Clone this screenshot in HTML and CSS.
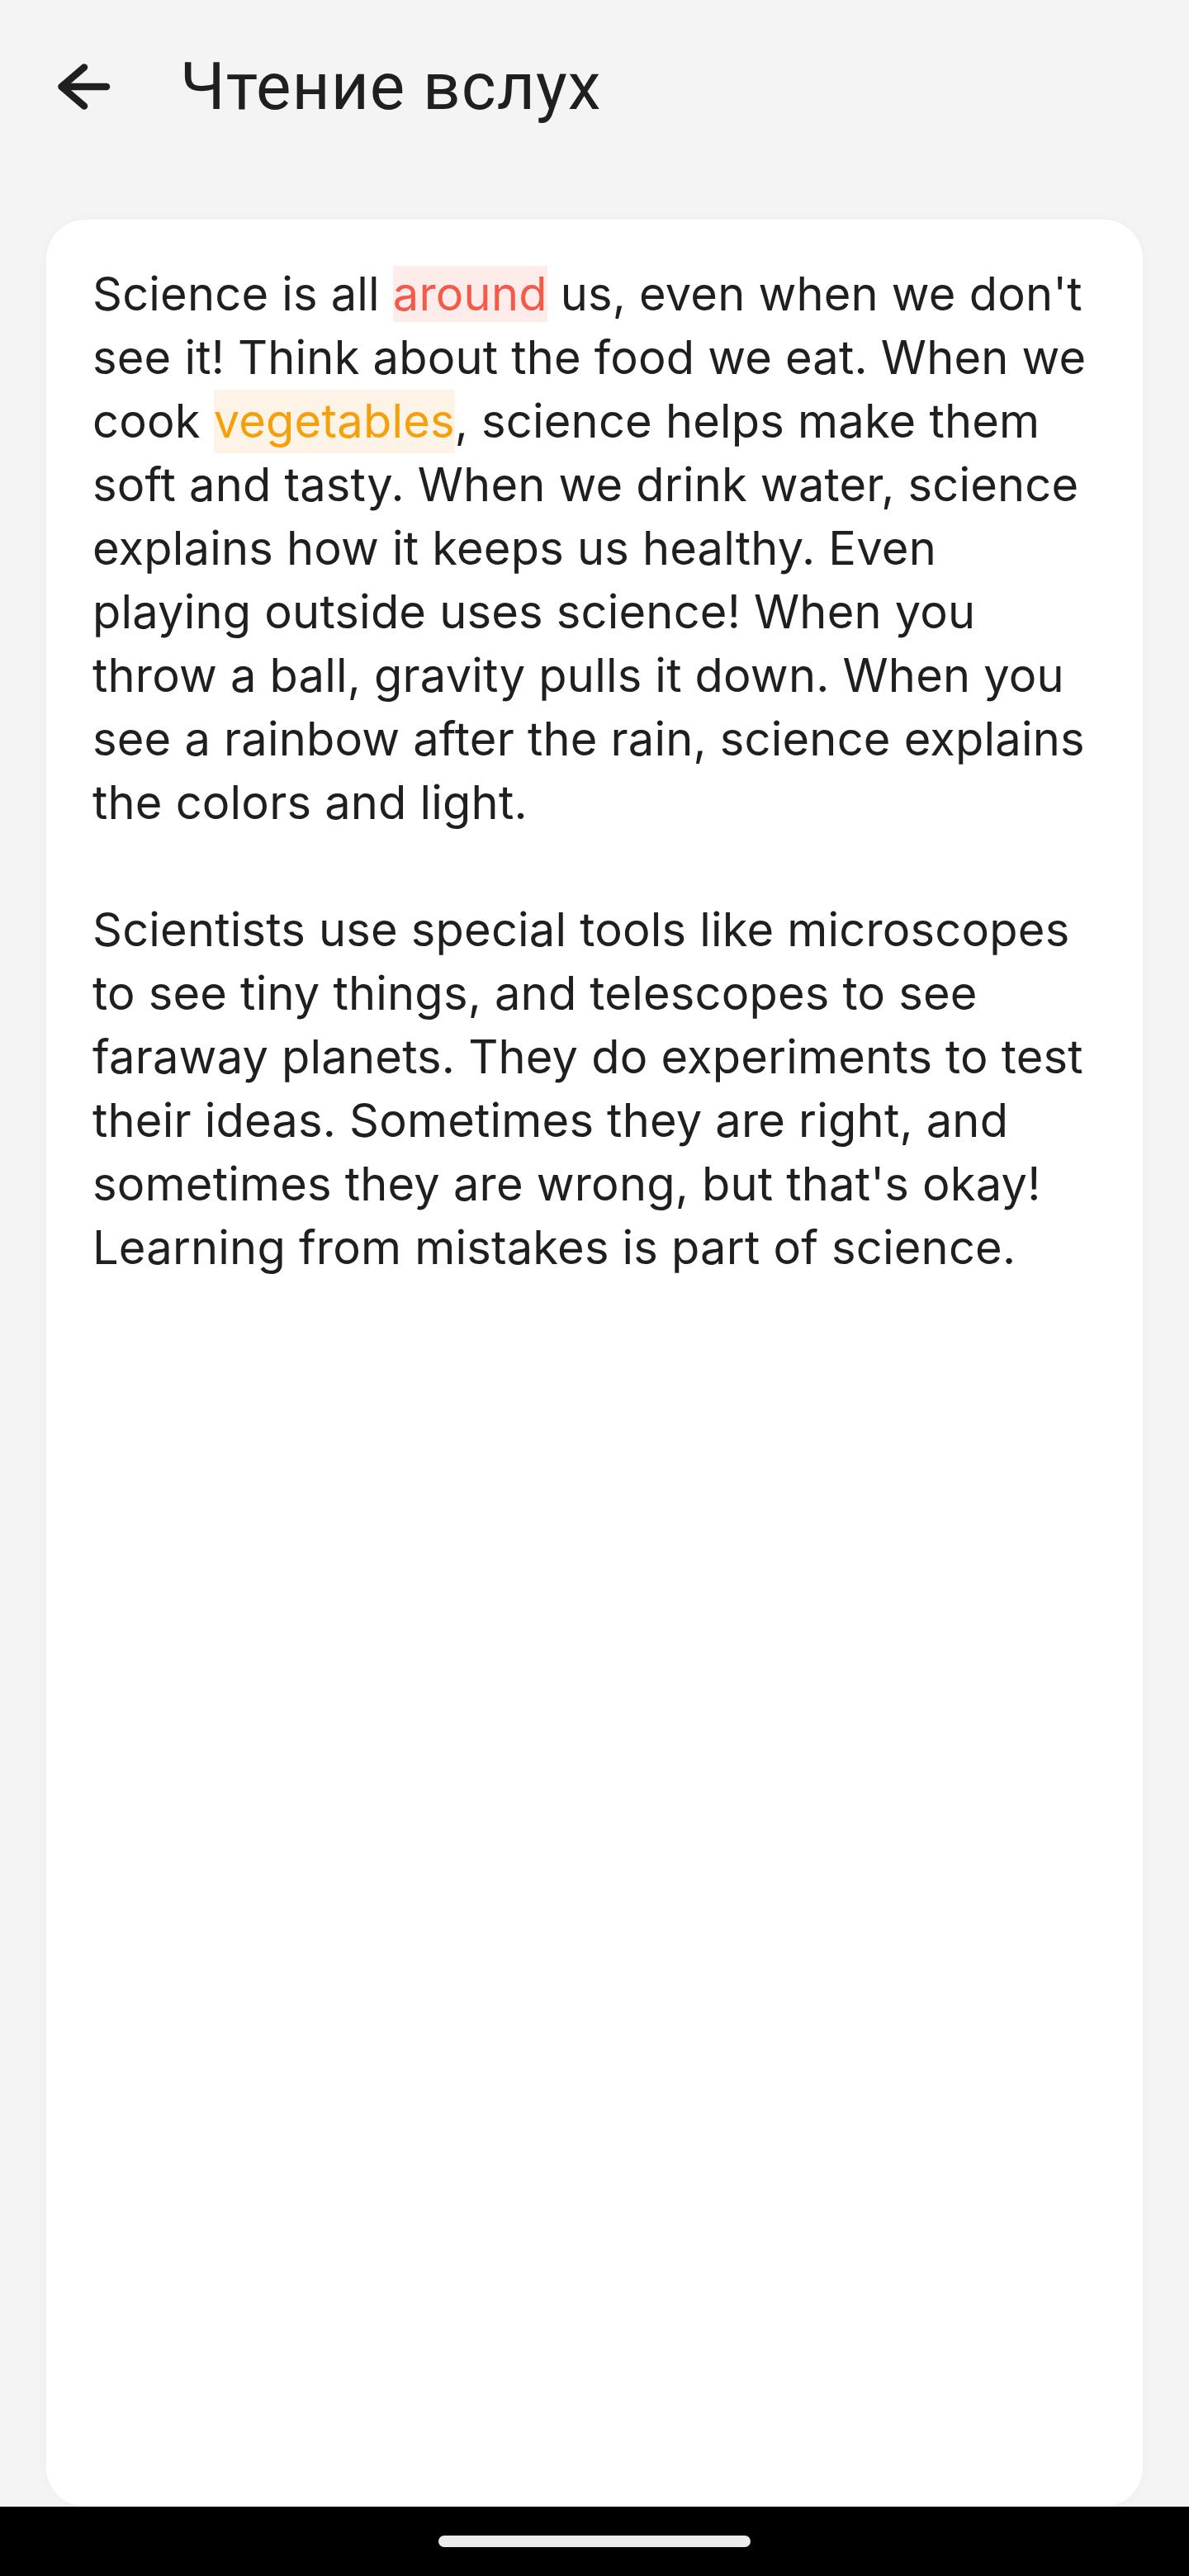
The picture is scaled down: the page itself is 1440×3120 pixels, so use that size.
FILE: index.html
```html
<!DOCTYPE html>
<html lang="ru">
<head>
    <meta charset="UTF-8">
    <meta name="viewport" content="width=device-width, initial-scale=1.0">
    <title>Чтение вслух</title>
    <link rel="stylesheet" href="styles.css">
</head>
<body>

    <header class="topbar">
        <button class="back" aria-label="Назад">
            <svg width="64" height="56" viewBox="0 0 64 56">
                <polyline points="32,4.5 4.5,28 32,51.5" fill="none" stroke="#1f1f1f" stroke-width="8.5" stroke-linecap="round" stroke-linejoin="round"/>
                <line x1="5" y1="28" x2="59" y2="28" stroke="#1f1f1f" stroke-width="8.5" stroke-linecap="round"/>
            </svg>
        </button>
        <h1>Чтение вслух</h1>
    </header>

    <main class="card">
        <p>Science is all <span class="word">around</span> us, even when we don't see it! Think about the food we eat. When we cook <span class="sentence">vegetables</span>, science helps make them soft and tasty. When we drink water, science explains how it keeps us healthy. Even playing outside uses science! When you throw a ball, gravity pulls it down. When you see a rainbow after the rain, science explains the colors and light.</p>

        <p>Scientists use special tools like microscopes to see tiny things, and telescopes to see faraway planets. They do experiments to test their ideas. Sometimes they are right, and sometimes they are wrong, but that's okay! Learning from mistakes is part of science.</p>
    </main>

    <div class="navbar">
        <div class="handle"></div>
    </div>

</body>
</html>
```

FILE: styles.css
```css
html, body {
    margin: 0;
    padding: 0;
}

body {
    width: 1440px;
    height: 3120px;
    background: #f4f4f4;
    display: flex;
    flex-direction: column;
    color: #1f1f1f;
}

.topbar {
    height: 210px;
    flex-shrink: 0;
    display: flex;
    align-items: center;
}

.back {
    border: none;
    background: none;
    padding: 0;
    margin-left: 70px;
    width: 64px;
    height: 56px;
    display: flex;
}

.topbar h1 {
    margin: 0 0 0 84px;
    font-family: Roboto, "Noto Sans", sans-serif;
    font-weight: 400;
    font-size: 80px;
    line-height: 94px;
    letter-spacing: 1px;
}

.card {
    flex: 1;
    margin: 56px 56px 0;
    padding: 52px 56px;
    background: #fff;
    border-radius: 48px;
    box-shadow: 0 0 12px rgba(0, 0, 0, 0.03);
    font-family: Inter, "Noto Sans", sans-serif;
    font-size: 56px;
    line-height: 77px;
    letter-spacing: 0.2px;
}

.card p {
    margin: 0 0 77px;
}

.word {
    color: #f45a4a;
    background: #fdecea;
}

.sentence {
    display: inline-block;
    color: #f5a00a;
    background: #fdf4e7;
}

.navbar {
    height: 84px;
    flex-shrink: 0;
    background: #000;
    display: flex;
    justify-content: center;
    align-items: center;
}

.handle {
    width: 378px;
    height: 14px;
    border-radius: 7px;
    background: #ebebeb;
}
```
